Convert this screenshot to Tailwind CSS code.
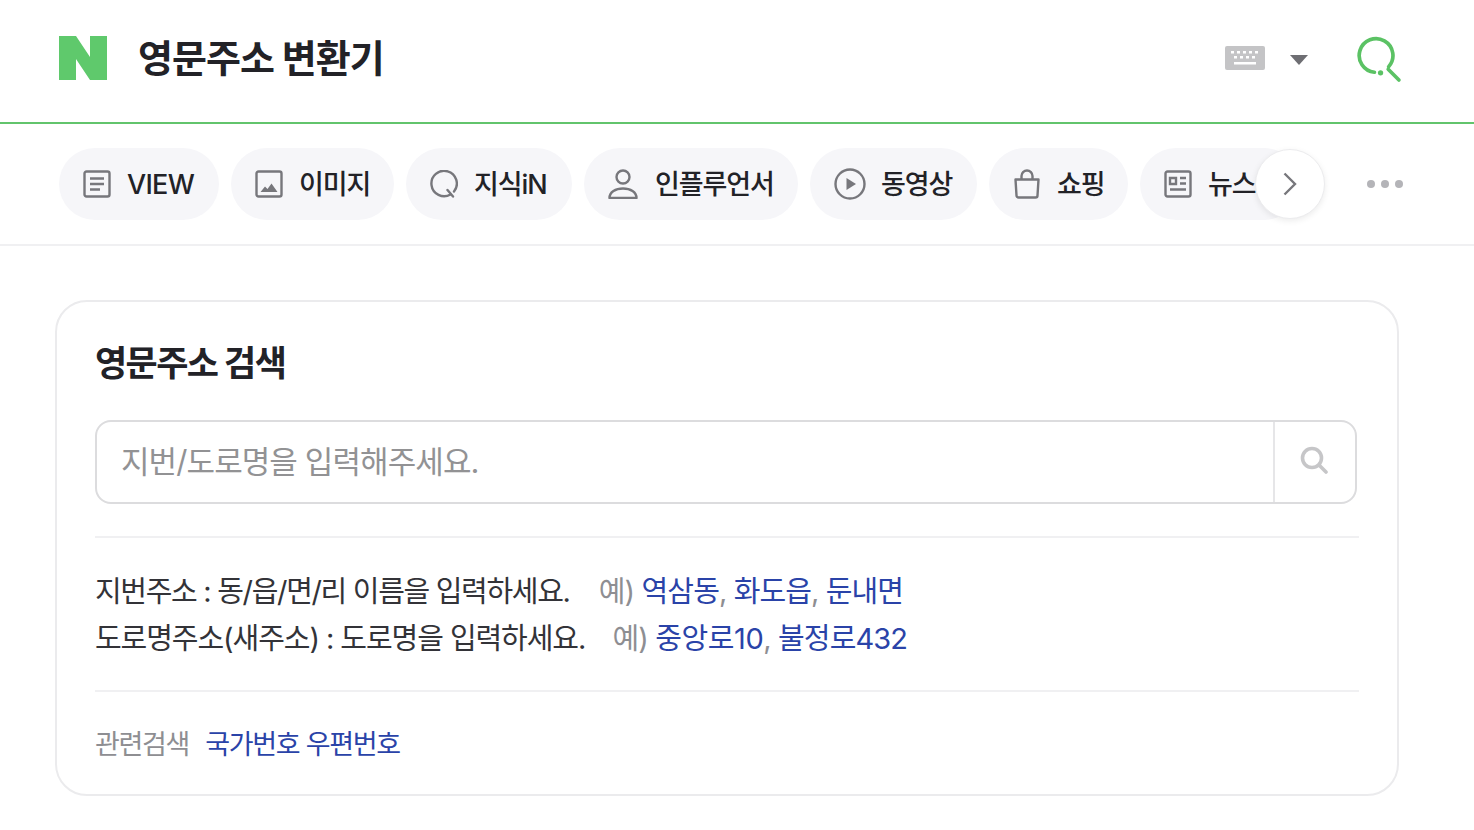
<!DOCTYPE html>
<html lang="ko">
<head>
  <meta charset="UTF-8">
  <title>영문주소 변환기</title>
  <script src="https://cdn.jsdelivr.net/npm/@tailwindcss/browser@4"></script>
</head>
<body class="bg-white overflow-hidden font-['Inter','Noto_Sans_CJK_KR',sans-serif] text-[#222227]">
  <!-- Header -->
  <header class="h-[124px] border-b-2 border-[#62c46c] flex items-center pl-[59px] pr-[72px] pb-[6px]">
    <svg class="w-[48px] h-[44px] shrink-0" viewBox="0 0 48 44"><path fill="#5fc96c" d="M0 0h17l14 21V0h17v44H31L17 23v21H0z"/></svg>
    <h1 class="ml-[31px] text-[38px] font-bold tracking-[-1px] leading-none">영문주소 변환기</h1>
    <div class="ml-auto flex items-center">
      <svg class="w-[40px] h-[24px]" viewBox="0 0 40 24">
        <rect width="40" height="24" rx="2" fill="#c4c4c6"/>
        <g fill="#fff"><rect x="6" y="5" width="3" height="2.5"/><rect x="12" y="5" width="3" height="2.5"/><rect x="18" y="5" width="3" height="2.5"/><rect x="24" y="5" width="3" height="2.5"/><rect x="30" y="5" width="3" height="2.5"/><rect x="9" y="10" width="3" height="2.5"/><rect x="15" y="10" width="3" height="2.5"/><rect x="21" y="10" width="3" height="2.5"/><rect x="27" y="10" width="3" height="2.5"/><rect x="9" y="16" width="22" height="2.5"/></g>
      </svg>
      <svg class="w-[18px] h-[10px] ml-[25px] mt-[3px]" viewBox="0 0 18 10"><path fill="#6e6e73" d="M0 0h18L9 10z"/></svg>
      <svg class="w-[47px] h-[47px] ml-[47px] mt-[2px]" viewBox="0 0 46 46" fill="none" stroke="#5bc264" stroke-width="3.6" stroke-linecap="round">
        <path d="M19 35.5A16.5 16.5 0 1 1 33 30"/><path d="M32.5 32.5L43 43"/><circle cx="25" cy="36" r="2.6" fill="#5bc264" stroke="none"/>
      </svg>
    </div>
  </header>

  <!-- Tabs -->
  <nav class="relative h-[122px] border-b-2 border-[#f0f0f2] flex items-center pl-[59px] text-[27px] font-medium tracking-[-1.1px]">
    <div class="flex gap-[12px]">
      <a class="h-[72px] w-[160px] shrink-0 rounded-full bg-[#f6f6f9] flex items-center pl-[24px]">
        <svg class="w-[28px] h-[28px] shrink-0" viewBox="0 0 28 28" fill="none" stroke="#77777c" stroke-width="2.4"><rect x="1.500" y="1.500" width="25" height="25" rx="2"/><path d="M7 8.500h14M7 14h14M7 19.500h10"/></svg>
        <span class="ml-[16px] pt-[2px] tracking-[-0.7px]">VIEW</span>
      </a>
      <a class="h-[72px] w-[163px] shrink-0 rounded-full bg-[#f6f6f9] flex items-center pl-[24px]">
        <svg class="w-[28px] h-[28px] shrink-0" viewBox="0 0 28 28" fill="none" stroke="#77777c" stroke-width="2.4"><rect x="1.500" y="1.500" width="25" height="25" rx="2"/><path fill="#77777c" stroke="none" d="M5.500 22l4.500-5.500 2.500 2.500 4-5.500 6 8.500z"/></svg>
        <span class="ml-[16px] pt-[2px]">이미지</span>
      </a>
      <a class="h-[72px] w-[166px] shrink-0 rounded-full bg-[#f6f6f9] flex items-center pl-[24px]">
        <svg class="w-[28px] h-[28px] shrink-0" viewBox="0 0 28 28" fill="none" stroke="#77777c" stroke-width="2.4" stroke-linecap="round"><path d="M20.500 24.500A12.700 12.700 0 1 1 24 21.500"/><path d="M17.500 20l5.500 6.500"/></svg>
        <span class="ml-[16px] pt-[2px]">지식iN</span>
      </a>
      <a class="h-[72px] w-[214px] shrink-0 rounded-full bg-[#f6f6f9] flex items-center pl-[24px]">
        <svg class="w-[30px] h-[30px] shrink-0" viewBox="0 0 30 30" fill="none" stroke="#77777c" stroke-width="2.4" stroke-linejoin="round"><circle cx="15" cy="8" r="6.500"/><path d="M1.500 29c0-6 6-9.500 13.500-9.500S28.500 23 28.500 29z"/></svg>
        <span class="ml-[17px] pt-[2px]">인플루언서</span>
      </a>
      <a class="h-[72px] w-[167px] shrink-0 rounded-full bg-[#f6f6f9] flex items-center pl-[24px]">
        <svg class="w-[32px] h-[32px] shrink-0" viewBox="0 0 32 32" fill="none" stroke="#77777c" stroke-width="2.4"><circle cx="16" cy="16" r="14.500"/><path fill="#77777c" stroke="none" d="M12.500 10l9.500 6-9.500 6z"/></svg>
        <span class="ml-[15px] pt-[2px]">동영상</span>
      </a>
      <a class="h-[72px] w-[139px] shrink-0 rounded-full bg-[#f6f6f9] flex items-center pl-[24px]">
        <svg class="w-[28px] h-[30px] shrink-0" viewBox="0 0 28 30" fill="none" stroke="#77777c" stroke-width="2.4"><path d="M2.500 10.500h23l-1 16a2 2 0 0 1-2 2h-17a2 2 0 0 1-2-2z" stroke-linejoin="round"/><path d="M8.500 10.500V7a5.500 5.500 0 0 1 11 0v3.500"/></svg>
        <span class="ml-[16px] pt-[2px]">쇼핑</span>
      </a>
      <a class="h-[72px] w-[160px] shrink-0 rounded-full bg-[#f6f6f9] flex items-center pl-[24px]">
        <svg class="w-[28px] h-[28px] shrink-0" viewBox="0 0 28 28" fill="none" stroke="#77777c" stroke-width="2.4"><rect x="1.500" y="1.500" width="25" height="25" rx="2"/><path d="M6 8h6v6H6zM16 8h6M16 13.500h6M6 19.500h16"/></svg>
        <span class="ml-[16px] pt-[2px]">뉴스</span>
      </a>
    </div>
    <!-- next button lies over the tabs -->
    <button class="absolute left-[1255px] top-[25px] w-[70px] h-[70px] rounded-full bg-white border border-[#ececee] shadow-[0_2px_6px_rgba(0,0,0,0.08)] flex items-center justify-center">
      <svg class="w-[14px] h-[24px]" viewBox="0 0 14 24" fill="none" stroke="#77777c" stroke-width="2.400"><path d="M1.500 1.500L12 12 1.500 22.500"/></svg>
    </button>
    <div class="absolute left-[1367px] top-[56px] flex gap-[6px]">
      <span class="w-[8px] h-[8px] rounded-full bg-[#b4b4b8]"></span>
      <span class="w-[8px] h-[8px] rounded-full bg-[#b4b4b8]"></span>
      <span class="w-[8px] h-[8px] rounded-full bg-[#b4b4b8]"></span>
    </div>
  </nav>

  <!-- Search card -->
  <main class="ml-[55px] mt-[54px] w-[1344px] h-[496px] rounded-[32px] border-2 border-[#ebebed] px-[38px]">
    <h2 class="mt-[39px] text-[35px] leading-[44px] font-bold tracking-[-1.6px]">영문주소 검색</h2>
    <div class="mt-[35px] h-[84px] w-[1262px] rounded-[16px] border-2 border-[#dcdcde] flex items-center">
      <div class="flex-1 pl-[24px] text-[31px] text-[#929294] tracking-[-0.9px]">지번/도로명을 입력해주세요.</div>
      <div class="w-[82px] h-full border-l-2 border-[#e6e6e8] flex items-center justify-center pb-[4px] pr-[2px]">
        <svg class="w-[28px] h-[28px]" viewBox="0 0 28 28" fill="none" stroke="#c6c6c8" stroke-width="3.600" stroke-linecap="round"><circle cx="12" cy="12" r="9.500"/><path d="M19 19l7 7"/></svg>
      </div>
    </div>
    <div class="mt-[32px] border-t-2 border-[#f0f0f2] pt-[30px] pb-[28px] text-[29px] leading-[47px] tracking-[-0.9px] text-[#333338] w-[1264px]">
      <p><span class="tracking-[-1.32px]">지번주소 : 동/읍/면/리 이름을 입력하세요.</span> <span class="ml-[22px] text-[#8e8e92]">예)</span> <span class="text-[#2a43a8]">역삼동</span><span class="text-[#8e8e92]">,</span> <span class="text-[#2a43a8]">화도읍</span><span class="text-[#8e8e92]">,</span> <span class="text-[#2a43a8]">둔내면</span></p>
      <p><span class="tracking-[-1.07px]">도로명주소(새주소) : 도로명을 입력하세요.</span> <span class="ml-[20px] text-[#8e8e92]">예)</span> <span class="text-[#2a43a8] tracking-[-0.4px]">중앙로10</span><span class="text-[#8e8e92]">,</span> <span class="text-[#2a43a8]">불정로432</span></p>
    </div>
    <div class="border-t-2 border-[#f0f0f2] pt-[31px] text-[27px] leading-[44px] tracking-[-1.3px] w-[1264px] flex gap-[16px]">
      <span class="text-[#8e8e92]">관련검색</span>
      <span class="text-[#2a43a8]">국가번호 우편번호</span>
    </div>
  </main>
</body>
</html>
